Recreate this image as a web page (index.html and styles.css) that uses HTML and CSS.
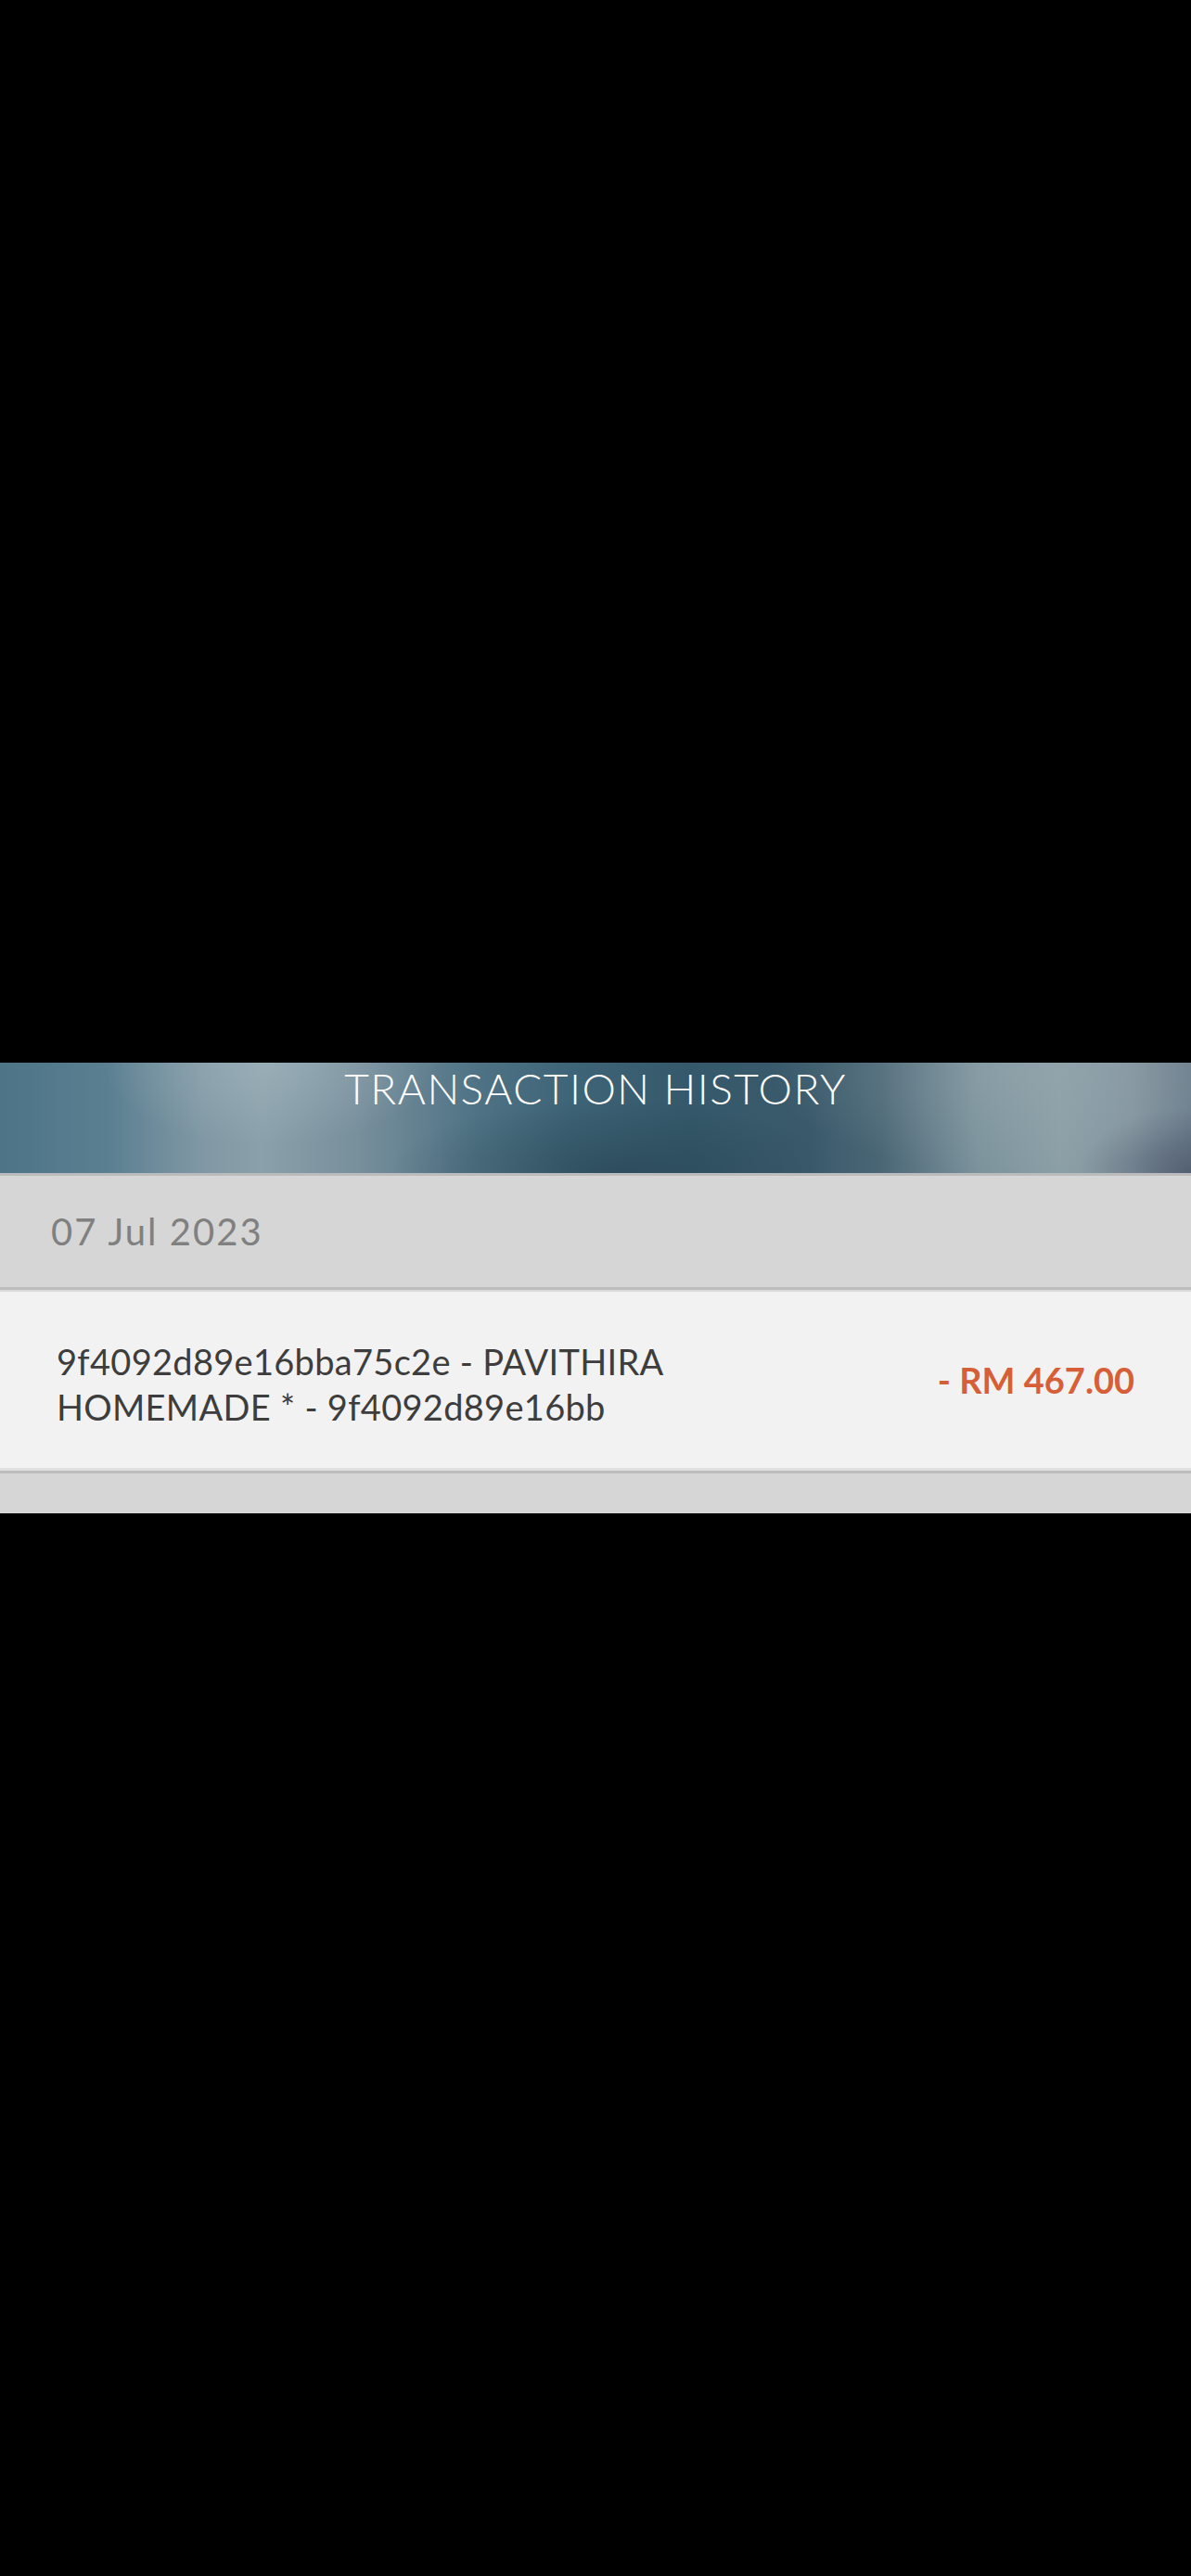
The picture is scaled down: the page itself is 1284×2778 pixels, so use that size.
FILE: index.html
```html
<!DOCTYPE html>
<html lang="en">
<head>
<meta charset="utf-8">
<title>Transaction History</title>
<link rel="stylesheet" href="styles.css">
</head>
<body>
<div class="screen">
  <div class="backdrop"></div>
  <section class="panel">
    <header class="panel-header">
      <h1 class="panel-title">TRANSACTION HISTORY</h1>
    </header>
    <div class="date-row">
      <span class="date-label">07 Jul 2023</span>
    </div>
    <div class="txn-wrap">
      <div class="txn-row">
        <p class="txn-desc">9f4092d89e16bba75c2e - PAVITHIRA HOMEMADE * - 9f4092d89e16bb</p>
        <span class="txn-amount">- RM 467.00</span>
      </div>
    </div>
    <div class="panel-footer"></div>
  </section>
</div>
</body>
</html>
```

FILE: styles.css
```css
html, body {
  margin: 0;
  padding: 0;
  background: #000;
}

body {
  font-family: Lato, "Open Sans", "Liberation Sans", sans-serif;
  width: 1284px;
  min-height: 2778px;
}

.screen {
  display: flex;
  flex-direction: column;
}

.backdrop {
  height: 1146px;
  background: #000;
}

.panel {
  display: flex;
  flex-direction: column;
}

.panel-header {
  height: 119px;
  border-bottom: 3px solid #bbbbbb;
  background:
    radial-gradient(ellipse 180px 90px at 290px 0px, rgba(170, 190, 198, 0.45), rgba(170, 190, 198, 0) 100%),
    radial-gradient(ellipse 260px 110px at 1090px 10px, rgba(160, 176, 182, 0.35), rgba(160, 176, 182, 0) 100%),
    radial-gradient(ellipse 240px 80px at 660px 119px, rgba(30, 55, 68, 0.45), rgba(30, 55, 68, 0) 100%),
    radial-gradient(ellipse 120px 70px at 1284px 119px, rgba(60, 70, 90, 0.55), rgba(60, 70, 90, 0) 100%),
    linear-gradient(90deg,
      #4d7487 0%,
      #5a7f91 9%,
      #8198a4 17%,
      #8aa0aa 22%,
      #788f9c 30%,
      #4f7385 40%,
      #3e6477 48%,
      #35596b 58%,
      #3a5a6b 68%,
      #4a6675 74%,
      #7b929c 82%,
      #8b9fa6 89%,
      #8495a0 95%,
      #6e7f8e 100%);
  display: flex;
  justify-content: center;
  align-items: flex-start;
}

.panel-title {
  margin: 0;
  font-family: Lato, "Open Sans", sans-serif;
  font-weight: 300;
  font-size: 46px;
  line-height: 55px;
  color: #ffffff;
  letter-spacing: 1.5px;
}

.date-row {
  background: #d6d6d6;
  padding: 36px 55px;
  border-bottom: 3px solid #bdbdbd;
}

.date-label {
  display: block;
  font-size: 40px;
  line-height: 48px;
  color: #808080;
  font-weight: 400;
  letter-spacing: 2px;
}

.txn-wrap {
  border-bottom: 3px solid #bcbcbc;
}

.txn-row {
  background: #f2f2f2;
  border-top: 2px solid #d9d9d9;
  border-bottom: 3px solid #e0e0e0;
  padding: 51px 61px 41px 61px;
  display: flex;
  justify-content: space-between;
  align-items: center;
}

.txn-desc {
  margin: 0;
  max-width: 740px;
  font-size: 38px;
  line-height: 49px;
  color: #3d3d3d;
  font-weight: 400;
  letter-spacing: 0.3px;
}

.txn-amount {
  font-size: 38px;
  line-height: 48px;
  font-weight: 700;
  color: #d75f37;
  white-space: nowrap;
  margin-bottom: 10px;
}

.panel-footer {
  height: 43px;
  background: #d6d6d6;
}
```
